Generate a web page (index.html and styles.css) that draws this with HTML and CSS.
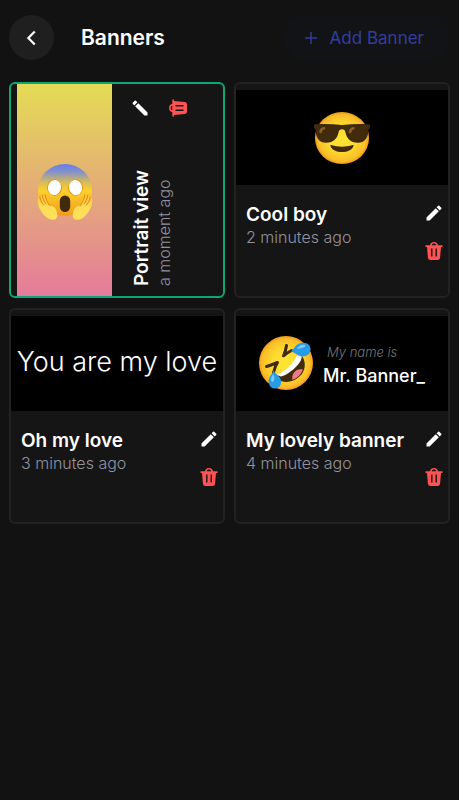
FILE: index.html
```
<!DOCTYPE html>
<html lang="en">
<head>
    <meta charset="UTF-8">
    <meta name="viewport" content="width=device-width, initial-scale=1.0">
    <title>Banners</title>
    <link rel="stylesheet" href="styles.css">
</head>
<body>

    <!-- Shared icons -->
    <svg class="sprite" aria-hidden="true">
        <symbol id="icon-edit" viewBox="0 0 24 24">
            <path d="M3 17.25V21h3.75L17.81 9.94l-3.75-3.75L3 17.25zM20.71 7.04a1 1 0 0 0 0-1.41l-2.34-2.34a1 1 0 0 0-1.41 0l-1.83 1.83 3.75 3.75 1.83-1.83z"/>
        </symbol>
        <symbol id="icon-trash" viewBox="0 0 20 20">
            <path fill-rule="evenodd" d="M1.5 4.300H6C6.200 2.300 7.600 1 10 1s3.800 1.300 4 3.300h4.500v1.700H17l-.9 10.500c-.1 1.500-1 2.500-2.500 2.500H6.400c-1.500 0-2.400-1-2.500-2.500L3 6H1.500zM7.700 4.300h4.600C12.100 3.200 11.300 2.600 10 2.600s-2.100.6-2.300 1.700zM7.100 7.500v8h1.400v-8zM11.500 7.500v8h1.400v-8z"/>
        </symbol>
    </svg>

    <header class="header">
        <button class="back-btn" aria-label="Back">
            <svg viewBox="0 0 24 24"><path d="M15 5l-7 7 7 7"/></svg>
        </button>
        <h1>Banners</h1>
        <button class="add-btn">
            <svg viewBox="0 0 12 12"><path d="M6 0v12M0 6h12"/></svg>
            Add Banner
        </button>
    </header>

    <main class="banner-grid">

        <!-- Portrait banner -->
        <article class="card portrait selected">
            <div class="preview sunset">
                <svg class="emoji" viewBox="0 0 56 56">
                    <defs>
                        <linearGradient id="scream-face" x1="0" y1="0" x2="0" y2="1">
                            <stop offset="0" stop-color="#667eea"/>
                            <stop offset=".14" stop-color="#7f8fd0"/>
                            <stop offset=".36" stop-color="#d9bd55"/>
                            <stop offset=".52" stop-color="#fdd02c"/>
                            <stop offset="1" stop-color="#f29b1a"/>
                        </linearGradient>
                        <linearGradient id="scream-hand" x1="0" y1="0" x2="0" y2="1">
                            <stop offset="0" stop-color="#fbbd30"/>
                            <stop offset=".5" stop-color="#ffdd55"/>
                            <stop offset="1" stop-color="#ffe25e"/>
                        </linearGradient>
                    </defs>
                    <ellipse cx="28" cy="26" rx="27" ry="26" fill="url(#scream-face)"/>
                    <ellipse cx="17.500" cy="23.500" rx="7.500" ry="8.300" fill="#e8940e"/>
                    <ellipse cx="38.500" cy="23.500" rx="7.500" ry="8.300" fill="#e8940e"/>
                    <ellipse cx="17.500" cy="23.500" rx="6.500" ry="7.600" fill="#fff" transform="rotate(15 17.500 23.500)"/>
                    <ellipse cx="38.500" cy="23.500" rx="6.500" ry="7.600" fill="#fff" transform="rotate(-15 38.500 23.500)"/>
                    <rect x="22.800" y="31.500" width="10.400" height="16.500" rx="5.200" fill="#422b0d"/>
                    <g id="hand">
                        <path fill="url(#scream-hand)" d="M1.500 32C0 36 .5 42 4 47c3 4.500 7 9 12 8.800 4-.2 4.700-3.300 4-7.300-.8-4.500-3.500-7-7.500-6.500L10 35c-.8-2.500-1.500-4.500-3-5-2-.5-4.500 0-5.500 2z"/>
                        <path fill="none" stroke="#e8830f" stroke-width="1" stroke-linecap="round" d="M2.800 33c.3 3 1.700 5.500 3.700 8M5.300 31.500c.3 3 1.500 5.500 3.700 8.500M8.300 31c.3 3 1.500 6.500 4.200 10.500"/>
                    </g>
                    <use href="#hand" transform="matrix(-1 0 0 1 56 0)"/>
                </svg>
            </div>
            <div class="info">
                <div class="text">
                    <h2>Portrait view</h2>
                    <p>a moment ago</p>
                </div>
                <div class="actions">
                    <button class="icon-btn" aria-label="Edit"><svg><use href="#icon-edit"/></svg></button>
                    <button class="icon-btn delete" aria-label="Delete"><svg><use href="#icon-trash"/></svg></button>
                </div>
            </div>
        </article>

        <article class="card">
            <div class="preview">
                <svg class="emoji" viewBox="0 0 56 56">
                    <defs>
                        <radialGradient id="face">
                            <stop offset="0" stop-color="#fee633"/>
                            <stop offset=".5" stop-color="#fedb30"/>
                            <stop offset=".88" stop-color="#fbbf28"/>
                            <stop offset="1" stop-color="#f39a1c"/>
                        </radialGradient>
                    </defs>
                    <ellipse cx="28" cy="28" rx="27" ry="26" fill="url(#face)"/>
                    <path fill="#422b0d" d="M0 14.500c9-.6 18-.5 28 .4 10-.9 19-1 28-.4v3.800l-1.500.7c0 8-3 13.700-10.500 13.700-8 0-11-4.500-12.500-10C31 20 30 19.300 28 19.300s-3 .7-3.500 3.400C23 28.200 20 32.700 12 32.700 4.500 32.700 1.500 27 1.500 19L0 18.300z"/>
                    <path fill="none" stroke="#8a6027" stroke-width="2.600" stroke-linecap="round" d="M6.500 22c.3-2 1.500-3.300 3.500-3.700M36 22c.3-2 1.500-3.300 3.500-3.700"/>
                    <path fill="#422b0d" d="M17.500 35c6.500 2.200 14.500 2.200 21 0 .8-.2 1.200.4 1 1.200C38 40 33.500 42 28 42s-10-2-11.500-5.800c-.2-.8.2-1.400 1-1.200z"/>
                </svg>
            </div>
            <div class="info">
                <div class="text">
                    <h2>Cool boy</h2>
                    <p>2 minutes ago</p>
                </div>
                <div class="actions">
                    <button class="icon-btn" aria-label="Edit"><svg><use href="#icon-edit"/></svg></button>
                    <button class="icon-btn delete" aria-label="Delete"><svg><use href="#icon-trash"/></svg></button>
                </div>
            </div>
        </article>

        <article class="card">
            <div class="preview">
                <p class="big-text">You are my love</p>
            </div>
            <div class="info">
                <div class="text">
                    <h2>Oh my love</h2>
                    <p>3 minutes ago</p>
                </div>
                <div class="actions">
                    <button class="icon-btn" aria-label="Edit"><svg><use href="#icon-edit"/></svg></button>
                    <button class="icon-btn delete" aria-label="Delete"><svg><use href="#icon-trash"/></svg></button>
                </div>
            </div>
        </article>

        <article class="card">
            <div class="preview">
                <svg class="emoji" viewBox="0 0 56 56">
                    <circle cx="27" cy="27" r="27" fill="url(#face)"/>
                    <path fill="#422b0d" d="M42 19c5 5 5 14 .5 19.500C37.500 44.500 29.500 47.500 22 45l-5-5c11-3 20-11 25-21z"/>
                    <path fill="#ef7a84" d="M44 33.500c-3-1-7 0-9 3-1.800 2.500-2 5-1.500 7.500 5-2 8.500-5.500 10.500-10.500z"/>
                    <path fill="#fff" d="M38 19.500h4.500c.8 3-1 6.500-5 10.800-5 5.200-11 9.500-15.500 10.200l-4-1.500C27 34.500 34.500 27.500 38 19.500z"/>
                    <path fill="none" stroke="#422b0d" stroke-width="3" stroke-linecap="round" stroke-linejoin="round" d="M27.500 9.500c-.5 4-1.500 7-3 10.300 2.500-2 5-3.800 8-5.300M7.500 30.500c3.500-1 7-2.500 11-4-2 3-3 6-4 10"/>
                    <path fill="#269be8" d="M32 15.500C35 14 36 7.200 43.500 6.700 49 6.500 52 9.700 51.500 14c-.5 4.500-4 6.500-8 6.400-5-.1-7-3.900-11.500-4.900zM14.500 34c.5 4 7.500 5.500 7.700 11.500.1 4-2.700 7-6.200 7-4 0-6.500-3.500-6.300-7.800C10 39.500 14 38 14.500 34z"/>
                    <path fill="#7cc8f7" d="M38 12.500c2-3 5-4.500 8-3.500 1 1.500-1 2.500-3 3-2 .4-3 1-5 .5zM12 43.500c0-3 1.500-4.500 2.500-5 1.500 2 1 5 0 7-1.500 1-2.500 0-2.500-2z"/>
                </svg>
                <div class="name-tag">
                    <p class="intro">My name is</p>
                    <p class="name">Mr. Banner_</p>
                </div>
            </div>
            <div class="info">
                <div class="text">
                    <h2>My lovely banner</h2>
                    <p>4 minutes ago</p>
                </div>
                <div class="actions">
                    <button class="icon-btn" aria-label="Edit"><svg><use href="#icon-edit"/></svg></button>
                    <button class="icon-btn delete" aria-label="Delete"><svg><use href="#icon-trash"/></svg></button>
                </div>
            </div>
        </article>

    </main>

</body>
</html>
```
FILE: styles.css
```
* {
    box-sizing: border-box;
}

body {
    margin: 0;
    font-family: Inter, sans-serif;
    background-color: #121212;
    color: white;
}

h1, h2, p {
    margin: 0;
}

button {
    padding: 0;
    border: none;
    font-family: inherit;
    cursor: pointer;
}

.sprite {
    display: none;
}

.header {
    display: flex;
    align-items: center;
    padding: 15px 9px 22px;
}

.header h1 {
    flex: 1;
    margin-left: 27px;
    font-size: 21px;
    font-weight: 600;
    line-height: 28px;
}

.back-btn {
    display: flex;
    align-items: center;
    justify-content: center;
    width: 45px;
    height: 45px;
    border-radius: 50%;
    background-color: #1f1f1f;
}

.back-btn svg {
    width: 22px;
    height: 24px;
    fill: none;
    stroke: white;
    stroke-width: 2.4;
}

.add-btn {
    display: flex;
    align-items: center;
    gap: 13px;
    height: 45px;
    padding: 0 26px 0 21px;
    border-radius: 23px;
    background-color: #121317;
    color: #303f9f;
    font-size: 17px;
}

.add-btn svg {
    width: 12px;
    height: 12px;
    stroke: #303f9f;
    stroke-width: 1.4;
}

.banner-grid {
    display: grid;
    grid-template-columns: 1fr 1fr;
    gap: 10px 9px;
    padding: 0 9px 9px;
}

.card {
    display: flex;
    flex-direction: column;
    min-width: 0;
    aspect-ratio: 1;
    padding-top: 6px;
    border: 2px solid #222222;
    border-radius: 6px;
    background-color: #151515;
    overflow: hidden;
}

.card.selected {
    border-color: #0ca678;
}

.preview {
    display: flex;
    align-items: center;
    justify-content: center;
    aspect-ratio: 20 / 9;
    background-color: black;
}

.emoji {
    flex: none;
    width: 56px;
    height: 56px;
}

.big-text {
    padding-bottom: 4px;
    font-size: 27px;
    font-weight: 300;
    white-space: nowrap;
}

.name-tag {
    margin-left: 8px;
    padding-top: 2px;
    white-space: nowrap;
}

.intro {
    padding-left: 4px;
    color: #777777;
    font-size: 13px;
    font-style: italic;
    font-weight: 300;
    line-height: 22px;
}

.name {
    font-size: 18px;
    font-weight: 500;
    line-height: 26px;
}

.info {
    display: flex;
    flex: 1;
    justify-content: space-between;
    padding: 18px 4px 8px 10px;
}

.text h2 {
    font-size: 19px;
    font-weight: 600;
    line-height: 24px;
    white-space: nowrap;
}

.text p {
    color: #9292a0;
    font-size: 16px;
    font-weight: 300;
    line-height: 20px;
}

.actions {
    display: flex;
    flex-direction: column;
    gap: 18px;
}

.icon-btn {
    display: flex;
    width: 20px;
    height: 20px;
    background: none;
    color: white;
}

.icon-btn svg {
    width: 20px;
    height: 20px;
    fill: currentColor;
}

.icon-btn.delete {
    color: #ff5252;
}

/* Portrait cards are read from bottom to top */
.card.portrait {
    flex-direction: row;
    padding: 0 0 0 6px;
}

.portrait .preview {
    height: 100%;
    padding-top: 3px;
    aspect-ratio: 9 / 20;
}

.sunset {
    background: linear-gradient(#e4dc55, #e57b9b);
}

.portrait .info {
    flex-direction: column-reverse;
    padding: 14px 8px 10px 18px;
}

.portrait .text {
    writing-mode: vertical-rl;
    transform: rotate(180deg);
    align-self: flex-start;
}

.portrait .actions {
    flex-direction: row;
}

.portrait .icon-btn {
    transform: rotate(-90deg);
}
```
